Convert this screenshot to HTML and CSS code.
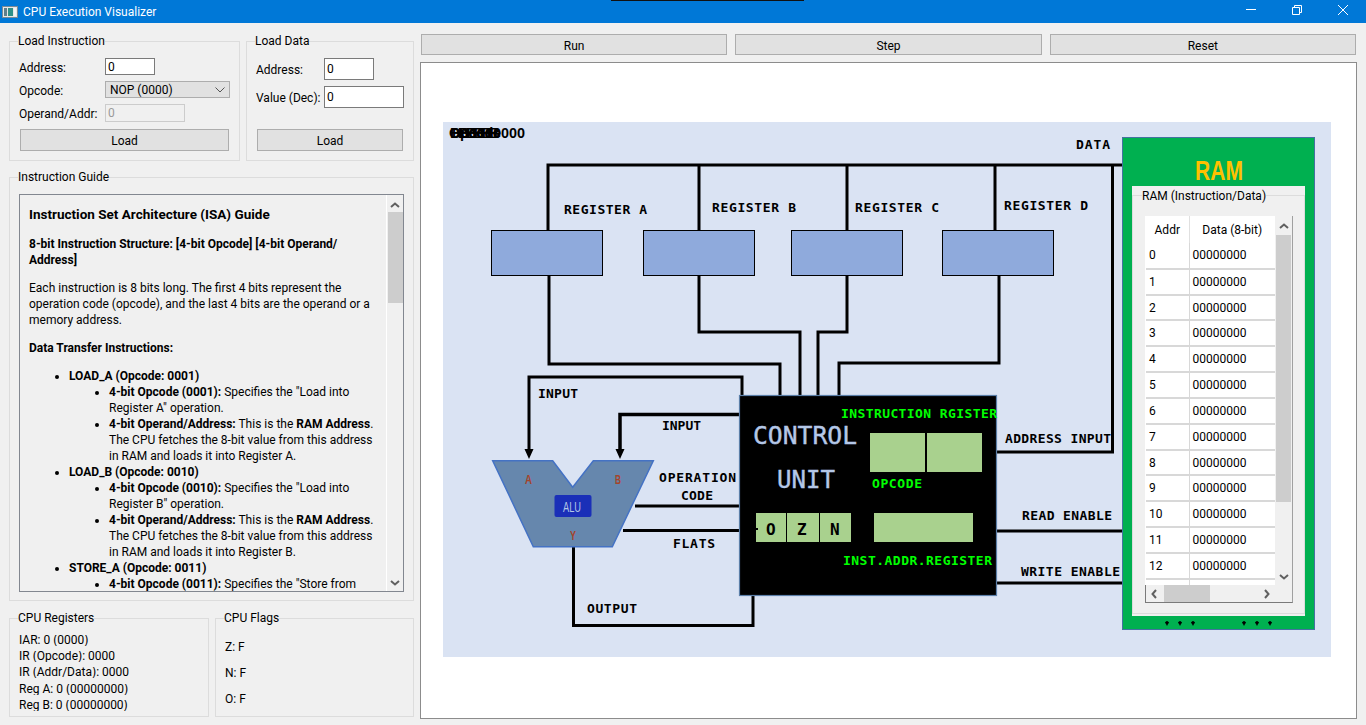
FILE: index.html
```html
<!DOCTYPE html>
<html lang="en">
<head>
<meta charset="utf-8">
<title>CPU Execution Visualizer</title>
<link rel="stylesheet" href="styles.css">
</head>
<body>
<div class="app">
  <header class="titlebar">
    <div class="title-left">
      <svg class="app-icon" width="16" height="12" viewBox="0 0 16 12"><rect x="0.5" y="0.5" width="15" height="11" fill="#e8e8e8" stroke="#7a8a96"/><rect x="2" y="2" width="3" height="8" fill="#5f7f8c"/><rect x="6" y="2" width="5" height="8" fill="#2f8f88"/><rect x="12" y="2" width="2" height="8" fill="#f4f4f4"/></svg>
      <span>CPU Execution Visualizer</span>
    </div>
    <div class="win-controls">
      <div class="win-btn"><svg width="12" height="12" viewBox="0 0 12 12"><path d="M1 5.5H11" stroke="#fff" fill="none"/></svg></div>
      <div class="win-btn"><svg width="12" height="12" viewBox="0 0 12 12"><path d="M1.5 3.5H8.5V10.5H1.5ZM3.5 3.5V1.5H10.5V8.5H8.5" stroke="#fff" fill="none"/></svg></div>
      <div class="win-btn"><svg width="12" height="12" viewBox="0 0 12 12"><path d="M1 1L11 11M11 1L1 11" stroke="#fff" fill="none"/></svg></div>
    </div>
    <div class="title-sliver"></div>
  </header>

  <main class="main">
    <section class="left">
      <div class="row top-row">
        <fieldset class="group load-inst">
          <legend>Load Instruction</legend>
          <div class="inst-form">
            <label>Address:</label>
            <input class="field w50" value="0">
            <label>Opcode:</label>
            <div class="combo"><span>NOP (0000)</span><svg width="10" height="6" viewBox="0 0 10 6"><path d="M0.5 0.5L5 5L9.5 0.5" fill="none" stroke="#555"/></svg></div>
            <label>Operand/Addr:</label>
            <input class="field w80 disabled" value="0" disabled>
          </div>
          <button class="btn load-btn-a">Load</button>
        </fieldset>
        <fieldset class="group load-data">
          <legend>Load Data</legend>
          <div class="data-form">
            <label>Address:</label>
            <input class="field tall w50" value="0">
            <label>Value (Dec):</label>
            <input class="field tall w80" value="0">
          </div>
          <button class="btn load-btn-b">Load</button>
        </fieldset>
      </div>

      <fieldset class="group guide-group">
        <legend>Instruction Guide</legend>
        <div class="guide">
          <div class="guide-text">
            <h3>Instruction Set Architecture (ISA) Guide</h3>
            <p class="b">8-bit Instruction Structure: [4-bit Opcode] [4-bit Operand/<br>Address]</p>
            <p>Each instruction is 8 bits long. The first 4 bits represent the<br>operation code (opcode), and the last 4 bits are the operand or a<br>memory address.</p>
            <p class="b">Data Transfer Instructions:</p>
            <ul>
              <li><b>LOAD_A (Opcode: 0001)</b>
                <ul>
                  <li><b>4-bit Opcode (0001):</b> Specifies the "Load into<br>Register A" operation.</li>
                  <li><b>4-bit Operand/Address:</b> This is the <b>RAM Address</b>.<br>The CPU fetches the 8-bit value from this address<br>in RAM and loads it into Register A.</li>
                </ul>
              </li>
              <li><b>LOAD_B (Opcode: 0010)</b>
                <ul>
                  <li><b>4-bit Opcode (0010):</b> Specifies the "Load into<br>Register B" operation.</li>
                  <li><b>4-bit Operand/Address:</b> This is the <b>RAM Address</b>.<br>The CPU fetches the 8-bit value from this address<br>in RAM and loads it into Register B.</li>
                </ul>
              </li>
              <li><b>STORE_A (Opcode: 0011)</b>
                <ul>
                  <li><b>4-bit Opcode (0011):</b> Specifies the "Store from<br>Register A" operation.</li>
                </ul>
              </li>
            </ul>
          </div>
          <div class="vbar">
            <svg class="arrow" width="10" height="6" viewBox="0 0 10 6"><path d="M1 5L5 1.5L9 5" fill="none" stroke="#606060" stroke-width="2"/></svg>
            <div class="vthumb guide-thumb"></div>
            <svg class="arrow end" width="10" height="6" viewBox="0 0 10 6"><path d="M1 1L5 4.5L9 1" fill="none" stroke="#606060" stroke-width="2"/></svg>
          </div>
        </div>
      </fieldset>

      <div class="row bottom-row">
        <fieldset class="group regs">
          <legend>CPU Registers</legend>
          <div class="reg-list">
            <div>IAR: 0 (0000)</div>
            <div>IR (Opcode): 0000</div>
            <div>IR (Addr/Data): 0000</div>
            <div>Reg A: 0 (00000000)</div>
            <div>Reg B: 0 (00000000)</div>
          </div>
        </fieldset>
        <fieldset class="group flags">
          <legend>CPU Flags</legend>
          <div class="flag-list">
            <div>Z: F</div>
            <div>N: F</div>
            <div>O: F</div>
          </div>
        </fieldset>
      </div>
    </section>

    <section class="right">
      <div class="actions">
        <button class="btn">Run</button>
        <button class="btn">Step</button>
        <button class="btn">Reset</button>
      </div>
      <div class="canvas">
        <svg class="diagram" width="935" height="655" viewBox="421 63 935 655">
          <rect x="443" y="122" width="888" height="535" fill="#dae3f3"/>

          <text class="t-over" x="461" y="138">00000000</text>
          <text class="t-over" x="449" y="138" textLength="52">Opcode</text>
          <text class="t-over" x="450" y="138" textLength="50">BBBBBB</text>
          <text class="t-over" x="452" y="138" textLength="46">HHHHHH</text>

          <g fill="none" stroke="#000">
            <path class="w3" d="M548 230V165H1122"/>
            <path class="w3" d="M699 230V165M847 230V165M995 230V165"/>
            <path class="w3" d="M997 452H1112.5V165"/>
            <path class="w3" d="M549 275V364H780V395"/>
            <path class="w3" d="M699 275V332H800V395"/>
            <path class="w3" d="M847 275V332H818V395"/>
            <path class="w3" d="M999 275V363H839V395"/>
            <path class="w3" d="M529 450V377H742V395"/>
            <path class="w4" d="M620 450V414.5H740"/>
            <path class="w3" d="M635 506H740M623 530.5H740"/>
            <path class="w3" d="M573.5 547V625.5H753V595"/>
            <path class="w3" d="M997 531H1122M997 583H1122"/>
          </g>
          <path d="M524.5 449H533.5L529 459ZM615.5 449H624.5L620 459Z" fill="#000"/>

          <g fill="#8faadc" stroke="#000">
            <rect x="491.5" y="230.5" width="111" height="45"/>
            <rect x="643.5" y="230.5" width="111" height="45"/>
            <rect x="791.5" y="230.5" width="111" height="45"/>
            <rect x="942.5" y="230.5" width="111" height="45"/>
          </g>

          <polygon points="492.7,460.7 552.7,460.7 572.7,487.3 593.3,460.7 653.3,460.7 612.3,546.7 533.3,546.7" fill="#6687ad" stroke="#4472c4" stroke-width="1.5"/>
          <rect x="554.5" y="495" width="37" height="22" rx="2" fill="#1a2fb8"/>
          <text class="t-alu" x="563" y="512" textLength="18" lengthAdjust="spacingAndGlyphs">ALU</text>
          <text class="t-port" x="525" y="484" textLength="7" lengthAdjust="spacingAndGlyphs">A</text>
          <text class="t-port" x="615" y="484" textLength="6" lengthAdjust="spacingAndGlyphs">B</text>
          <text class="t-port" x="570" y="540" textLength="6" lengthAdjust="spacingAndGlyphs">Y</text>

          <rect x="739.5" y="395.5" width="257" height="200" fill="#000" stroke="#5b7fa8" stroke-width="1.2"/>
          <g fill="#a9d18e">
            <rect x="870" y="433" width="55" height="39"/>
            <rect x="927" y="433" width="55" height="39"/>
            <rect x="756" y="513" width="30" height="29"/>
            <rect x="787" y="513" width="32" height="29"/>
            <rect x="820" y="513" width="31" height="29"/>
            <rect x="874" y="513" width="99" height="29"/>
          </g>
          <rect x="755" y="528" width="3" height="2" fill="#000"/>
          <text class="t-flag" x="766" y="535">O</text>
          <text class="t-flag" x="797" y="535">Z</text>
          <text class="t-flag" x="830" y="535">N</text>

          <text class="t-cu" x="753" y="444" textLength="104" lengthAdjust="spacingAndGlyphs">CONTROL</text>
          <text class="t-cu" x="777" y="488" textLength="58" lengthAdjust="spacingAndGlyphs">UNIT</text>
          <text class="t-green" x="841" y="418" textLength="156">INSTRUCTION RGISTER</text>
          <text class="t-green" x="872" y="488" textLength="50">OPCODE</text>
          <text class="t-green" x="843" y="565" textLength="149">INST.ADDR.REGISTER</text>

          <text class="t" x="564" y="214" textLength="83">REGISTER A</text>
          <text class="t" x="712" y="212" textLength="84">REGISTER B</text>
          <text class="t" x="855" y="212" textLength="84">REGISTER C</text>
          <text class="t" x="1004" y="210" textLength="84">REGISTER D</text>
          <text class="t" x="1076" y="149" textLength="34">DATA</text>
          <text class="t" x="538" y="398" textLength="40">INPUT</text>
          <text class="t" x="662" y="430" textLength="39">INPUT</text>
          <text class="t" x="659" y="482" textLength="77">OPERATION</text>
          <text class="t" x="681" y="500" textLength="32">CODE</text>
          <text class="t" x="673" y="548" textLength="42">FLATS</text>
          <text class="t" x="587" y="613" textLength="50">OUTPUT</text>
          <text class="t" x="1005" y="443" textLength="106">ADDRESS INPUT</text>
          <text class="t" x="1022" y="520" textLength="90">READ ENABLE</text>
          <text class="t" x="1021" y="576" textLength="99">WRITE ENABLE</text>

          <rect x="1122.5" y="137.5" width="192" height="492" fill="#00b050" stroke="#4472a0"/>
          <text class="t-ram" x="1195" y="180" textLength="48" lengthAdjust="spacingAndGlyphs">RAM</text>
          <g fill="#000">
            <path d="M1165 622h4l-2 4zM1178 622h4l-2 4zM1191 622h4l-2 4zM1242 622h4l-2 4zM1255 622h4l-2 4zM1268 622h4l-2 4z"/>
            <circle cx="1167" cy="622.5" r="1.5"/><circle cx="1180" cy="622.5" r="1.5"/><circle cx="1193" cy="622.5" r="1.5"/>
            <circle cx="1244" cy="622.5" r="1.5"/><circle cx="1257" cy="622.5" r="1.5"/><circle cx="1270" cy="622.5" r="1.5"/>
          </g>
        </svg>

        <div class="ram-widget">
          <fieldset class="group ram-group">
            <legend>RAM (Instruction/Data)</legend>
            <div class="ram-box">
              <div class="ram-clip">
                <table class="ram-table">
                  <thead><tr><th>Addr</th><th>Data (8-bit)</th></tr></thead>
                  <tbody>
                    <tr><td>0</td><td>00000000</td></tr>
                    <tr><td>1</td><td>00000000</td></tr>
                    <tr><td>2</td><td>00000000</td></tr>
                    <tr><td>3</td><td>00000000</td></tr>
                    <tr><td>4</td><td>00000000</td></tr>
                    <tr><td>5</td><td>00000000</td></tr>
                    <tr><td>6</td><td>00000000</td></tr>
                    <tr><td>7</td><td>00000000</td></tr>
                    <tr><td>8</td><td>00000000</td></tr>
                    <tr><td>9</td><td>00000000</td></tr>
                    <tr><td>10</td><td>00000000</td></tr>
                    <tr><td>11</td><td>00000000</td></tr>
                    <tr><td>12</td><td>00000000</td></tr>
                    <tr><td>13</td><td>00000000</td></tr>
                  </tbody>
                </table>
              </div>
              <div class="vbar ram-v">
                <svg class="arrow" width="10" height="6" viewBox="0 0 10 6"><path d="M1 5L5 1.5L9 5" fill="none" stroke="#606060" stroke-width="2"/></svg>
                <div class="vthumb ram-thumb"></div>
                <svg class="arrow end" width="10" height="6" viewBox="0 0 10 6"><path d="M1 1L5 4.5L9 1" fill="none" stroke="#606060" stroke-width="2"/></svg>
              </div>
              <div class="hbar">
                <svg width="6" height="10" viewBox="0 0 6 10"><path d="M5 1L1.5 5L5 9" fill="none" stroke="#606060" stroke-width="2"/></svg>
                <div class="hthumb"></div>
                <svg width="6" height="10" viewBox="0 0 6 10"><path d="M1 1L4.5 5L1 9" fill="none" stroke="#606060" stroke-width="2"/></svg>
              </div>
              <div class="corner"></div>
            </div>
          </fieldset>
        </div>
      </div>
    </section>
  </main>
</div>
</body>
</html>
```
FILE: styles.css
```css
* { box-sizing: border-box; }
html, body { margin: 0; padding: 0; }
body {
  font-family: Roboto, "Noto Sans", sans-serif;
  font-size: 12px;
  line-height: 16px;
  color: #000;
  background: #f0f0f0;
  overflow: hidden;
}
.app { width: 1366px; height: 725px; display: flex; flex-direction: column; overflow: hidden; }

.titlebar {
  position: relative;
  height: 23px;
  flex: none;
  background: #0078d7;
  color: #fff;
  display: flex;
  justify-content: space-between;
}
.title-left { display: flex; align-items: center; padding-left: 2px; gap: 5px; }
.app-icon { display: block; }
.win-controls { display: flex; }
.win-btn { width: 46px; height: 23px; display: flex; align-items: center; justify-content: center; padding-bottom: 3px; }
.title-sliver { position: absolute; left: 611px; top: 0; width: 193px; height: 1px; background: #111; }

.main { flex: 1; display: flex; gap: 6px; padding: 10px 0 0 9px; min-height: 0; }
.left { width: 405px; flex: none; display: flex; flex-direction: column; }
.row { display: flex; gap: 6px; }

.group { margin: 0; padding: 0; border: 1px solid #dcdcdc; min-width: 0; }
.group legend { margin-left: 8px; padding: 0; line-height: 16px; }

.top-row { height: 128px; }
.load-inst { width: 231px; }
.load-data { width: 168px; }
.guide-group { height: 432px; margin-top: 8px; }
.bottom-row { height: 107px; margin-top: 9px; }
.regs { width: 200px; }
.flags { width: 199px; }

.inst-form {
  display: grid;
  grid-template-columns: 86px auto;
  grid-template-rows: 17px 17px 18px;
  row-gap: 6px;
  align-items: center;
  justify-items: start;
  padding: 9px 0 0 9px;
}
.inst-form label, .data-form label { padding-top: 2px; }
.data-form {
  display: grid;
  grid-template-columns: 68px auto;
  grid-template-rows: 22px 22px;
  row-gap: 6px;
  align-items: center;
  justify-items: start;
  padding: 9px 0 0 9px;
}
.field {
  font: inherit;
  height: 100%;
  padding: 0 2px;
  border: 1px solid #7a7a7a;
  background: #fff;
  color: #000;
  border-radius: 0;
  outline: none;
}
.w50 { width: 50px; }
.w80 { width: 80px; }
.field.disabled { border-color: #cccccc; background: #f0f0f0; color: #9a9a9a; }
.combo {
  width: 125px;
  height: 17px;
  background: #e1e1e1;
  border: 1px solid #adadad;
  display: flex;
  align-items: center;
  justify-content: space-between;
  padding: 0 4px 0 4px;
}
.btn {
  font: inherit;
  color: #000;
  height: 22px;
  padding: 2px 0 0;
  background: #e1e1e1;
  border: 1px solid #adadad;
  border-radius: 0;
  display: block;
}
.load-btn-a { width: 209px; margin: 7px 0 0 10px; }
.load-btn-b { width: 146px; margin: 21px 0 0 10px; }

.guide {
  display: flex;
  width: 385px;
  height: 398px;
  margin: 9px 0 0 9px;
  border: 1px solid #828790;
  overflow: hidden;
}
.guide-text { flex: 1; padding: 9px 0 0 9px; overflow: hidden; white-space: nowrap; min-width: 0; }
.guide-text h3 { margin: 0 0 12px; font-size: 13.5px; line-height: 20px; font-weight: 700; }
.guide-text p { margin: 0 0 12px; }
.guide-text .b { font-weight: 700; }
.guide-text ul { margin: 0; padding: 0 0 0 40px; list-style: disc; }
.guide-text b { font-weight: 700; }

.vbar {
  width: 17px;
  flex: none;
  background: #f0f0f0;
  border-left: 1px solid #fff;
  display: flex;
  flex-direction: column;
  align-items: center;
  padding-top: 7px;
}
.arrow { display: block; flex: none; }
.arrow.end { margin-top: auto; margin-bottom: 5px; }
.vthumb { width: 15px; background: #cdcdcd; }
.guide-thumb { height: 91px; margin-top: 4px; }

.reg-list { padding: 9px 0 0 9px; display: flex; flex-direction: column; gap: 5.2px; }
.reg-list div { height: 11px; line-height: 11px; overflow: hidden; white-space: nowrap; }
.flag-list { padding: 13px 0 0 9px; display: flex; flex-direction: column; gap: 10px; }

.right { width: 937px; flex: none; display: flex; flex-direction: column; }
.actions { display: flex; gap: 8px; padding: 1px 1px 0; }
.actions .btn { flex: 1 1 0; height: 21px; }
.canvas {
  position: relative;
  width: 937px;
  height: 657px;
  margin-top: 7px;
  background: #fff;
  border: 1px solid #8c8c8c;
}
.diagram { display: block; }

.t, .t-green, .t-flag, .t-cu { font-family: "DejaVu Sans Mono", "Liberation Mono", monospace; }
.t { font-size: 13px; font-weight: 700; fill: #000; }
.t-green { font-size: 13px; font-weight: 700; fill: #00ff00; }
.t-over { font-family: "Liberation Sans", sans-serif; font-size: 14.4px; font-weight: 700; fill: #000; }
.t-flag { font-size: 16px; font-weight: 700; fill: #000; }
.t-cu { font-size: 25px; fill: #b4c7e7; stroke: #b4c7e7; stroke-width: 0.4px; }
.t-ram { font-family: "Liberation Sans", sans-serif; font-size: 27px; font-weight: 700; fill: #ffc000; }
.t-alu { font-family: "Liberation Sans", sans-serif; font-size: 14px; fill: #b4c7e7; }
.t-port { font-family: "Liberation Sans", sans-serif; font-size: 12px; font-weight: 700; fill: #a5432a; }
.w3 { stroke-width: 3; }
.w4 { stroke-width: 3.5; }

.ram-widget {
  position: absolute;
  left: 711px;
  top: 123px;
  width: 173px;
  height: 430px;
  background: #f0f0f0;
  padding-bottom: 2px;
}
.ram-group { height: 428px; border-color: #dcdcdc; }
.ram-group legend { margin-left: 9px; padding-top: 2px; }
.ram-box {
  display: grid;
  grid-template-columns: 130px 17px;
  grid-template-rows: 369px 17px;
  width: 148px;
  height: 387px;
  margin: 12px 0 0 12px;
  border-right: 1px solid #a0a0a0;
  border-bottom: 1px solid #7a7a7a;
}
.ram-clip { overflow: hidden; background: #fff; padding-left: 1px; }
.ram-table { border-collapse: collapse; table-layout: fixed; width: 129px; }
.ram-table th { font-weight: 400; height: 27px; padding: 0; text-align: center; border-right: 1px solid #e0e0e0; }
.ram-table th:first-child { width: 43px; }
.ram-table td { height: 25.83px; padding: 0 0 0 3px; border-bottom: 2px solid #d8d8d8; border-right: 1px solid #d8d8d8; }
.ram-table th:last-child, .ram-table td:last-child { border-right: 0; }
.ram-v { border-left: 0; padding-top: 7px; }
.ram-thumb { height: 267px; margin-top: 6px; }
.hbar { display: flex; align-items: center; background: #f0f0f0; padding: 0 5px; border-left: 1px solid #7a7a7a; }
.hbar svg { flex: none; display: block; }
.hthumb { width: 46px; height: 17px; margin-left: 7px; margin-right: auto; background: #cdcdcd; }
.corner { background: #f0f0f0; }
```
